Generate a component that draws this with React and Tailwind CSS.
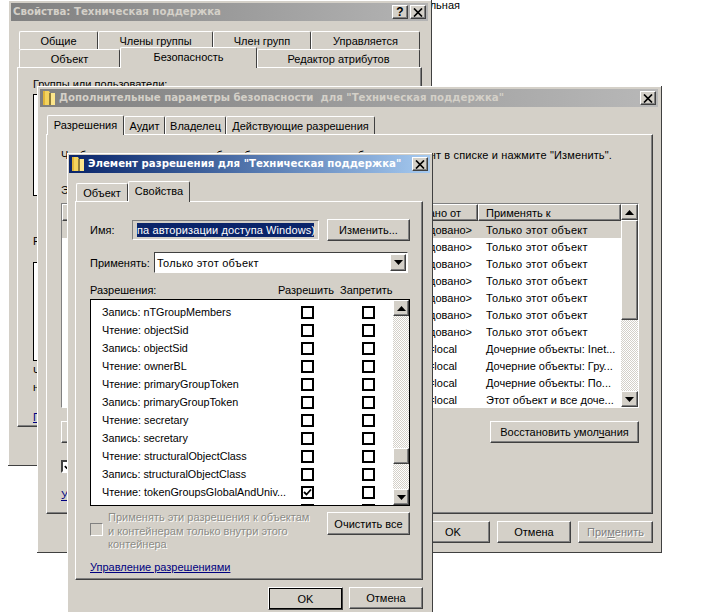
import React from 'react';

const bevel = 'border border-t-white border-l-white border-r-[#404040] border-b-[#404040] shadow-[inset_-1px_-1px_0_#808080]';
const dither = 'bg-[repeating-conic-gradient(#d4d0c8_0_25%,#ffffff_0_50%)] bg-[length:2px_2px]';

const Btn = ({ className = '', children }) => (
  <div className={`flex items-center justify-center bg-[#d4d0c8] ${bevel} ${className}`}>{children}</div>
);

const Arrow = ({ down }) => (
  <svg width="9" height="5" viewBox="0 0 9 5">
    <path d={down ? 'M0 0H9L4.5 5Z' : 'M0 5H9L4.5 0Z'} fill="#000" />
  </svg>
);

const CloseGlyph = () => (
  <svg width="10" height="9" viewBox="0 0 10 9">
    <path d="M1 0.5L9 8.5M9 0.5L1 8.5" stroke="#000" strokeWidth="1.7" fill="none" />
  </svg>
);

const Folder = () => (
  <svg width="14" height="16" viewBox="0 0 14 16" className="shrink-0">
    <path d="M1 1H7L8 3H13V15H1Z" fill="#f3d35e" />
    <path d="M7 3H9V15H7Z" fill="#8f7b3a" />
    <path d="M9 3H13V15H9Z" fill="#fbe58c" />
    <path d="M1 1H3V15H1Z" fill="#e0b53a" />
  </svg>
);

const TitleBar = ({ grad, text, icon, help, textColor }) => (
  <div className={`flex items-center h-[18px] pl-[2px] pr-[2px] ${grad}`}>
    {icon && <Folder />}
    <span className={`${icon ? 'ml-[3px]' : ''} whitespace-pre font-['DejaVu_Sans',sans-serif] font-bold text-[10.2px] ${textColor}`}>{text}</span>
    <div className="ml-auto flex gap-[2px]">
      {help && <Btn className="w-[16px] h-[14px] font-bold text-[12px]">?</Btn>}
      <Btn className="w-[16px] h-[14px]"><CloseGlyph /></Btn>
    </div>
  </div>
);

const Tab = ({ active, className = '', children }) => (
  <div
    className={`flex items-center justify-center rounded-t-[2px] bg-[#d4d0c8] border-t border-l border-r border-t-white border-l-white border-r-[#404040] whitespace-nowrap ${
      active ? 'relative z-10 -mb-px pb-[2px]' : ''
    } ${className}`}
  >
    {children}
  </div>
);

const Checkbox = ({ checked }) => (
  <div className="w-[13px] h-[13px] border-2 border-black bg-white flex items-center justify-center shrink-0">
    {checked && (
      <svg width="9" height="9" viewBox="0 0 9 9">
        <path d="M1 4L3.5 6.5L8 1.5" stroke="#000" strokeWidth="1.8" fill="none" />
      </svg>
    )}
  </div>
);

const permissions = [
  ['Запись: nTGroupMembers'],
  ['Чтение: objectSid'],
  ['Запись: objectSid'],
  ['Чтение: ownerBL'],
  ['Чтение: primaryGroupToken'],
  ['Запись: primaryGroupToken'],
  ['Чтение: secretary'],
  ['Запись: secretary'],
  ['Чтение: structuralObjectClass'],
  ['Запись: structuralObjectClass'],
  ['Чтение: tokenGroupsGlobalAndUniv...', true],
  ['Чтение: tokenGroupsNoGCAcceptable'],
];

const entries = [
  ['<не унаследовано>', 'Только этот объект'],
  ['<не унаследовано>', 'Только этот объект'],
  ['<не унаследовано>', 'Только этот объект'],
  ['<не унаследовано>', 'Только этот объект'],
  ['<не унаследовано>', 'Только этот объект'],
  ['<не унаследовано>', 'Только этот объект'],
  ['<не унаследовано>', 'Только этот объект'],
  ['DC=ad,DC=local', 'Дочерние объекты: Inet...'],
  ['DC=ad,DC=local', 'Дочерние объекты: Гру...'],
  ['DC=ad,DC=local', 'Дочерние объекты: По...'],
  ['DC=ad,DC=local', 'Этот объект и все доче...'],
];

const PropertiesWindow = () => (
  <div className="absolute left-[8px] top-0 w-[424px] h-[466px] bg-[#d4d0c8] border-r border-b border-[#404040] shadow-[inset_1px_1px_0_#fff] p-[3px]">
    <TitleBar grad="bg-gradient-to-r from-[#808080] to-[#b4b4b4]" textColor="text-[#d4d0c8]" text="Свойства: Техническая поддержка" help />
    <div className="mt-[10px] ml-[8px] flex h-[18px]">
      <Tab className="w-[79px]">Общие</Tab>
      <Tab className="w-[115px]">Члены группы</Tab>
      <Tab className="w-[98px]">Член групп</Tab>
      <Tab className="w-[109px]">Управляется</Tab>
    </div>
    <div className="ml-[8px] flex items-end h-[18px]">
      <Tab className="w-[101px] h-[18px]">Объект</Tab>
      <Tab active className="w-[137px] h-[21px]">Безопасность</Tab>
      <Tab className="w-[163px] h-[18px]">Редактор атрибутов</Tab>
    </div>
    <div className={`ml-[6px] w-[405px] h-[360px] pl-[15px] pt-[9px] ${bevel}`}>
      <p>Группы или пользователи:</p>
      <div className="mt-[3px] w-[300px] h-[102px] bg-white border border-black" />
      <p className="mt-[38px]">Разрешения для группы Техническая поддержка</p>
      <div className="mt-[14px] w-[300px] h-[99px] bg-white border border-black" />
      <p className="mt-[3px]">Чтобы задать особые разрешения или параметры,</p>
      <p className="mt-[2px]">нажмите кнопку "Дополнительно".</p>
      <p className="mt-[16px] text-[#000080] underline">Подробнее об управлении доступом</p>
    </div>
  </div>
);

const AdvancedWindow = () => (
  <div className="absolute left-[37px] top-[86px] w-[625px] h-[467px] bg-[#d4d0c8] border-r border-b border-[#404040] shadow-[inset_1px_1px_0_#fff] px-[3px] pt-[3px]">
    <TitleBar
      grad="bg-gradient-to-r from-[#808080] to-[#b8b8b8]"
      textColor="text-[#d4d0c8]"
      icon
      text={'Дополнительные параметры безопасности  для "Техническая поддержка"'}
    />
    <div className="mt-[9px] ml-[7px] flex items-end h-[18px]">
      <Tab active className="w-[77px] h-[20px]">Разрешения</Tab>
      <Tab className="w-[41px] h-[18px]">Аудит</Tab>
      <Tab className="w-[61px] h-[18px]">Владелец</Tab>
      <Tab className="w-[149px] h-[18px]">Действующие разрешения</Tab>
    </div>
    <div className={`ml-[6px] mr-[5px] h-[380px] pl-[14px] pr-[13px] pt-[13px] ${bevel}`}>
      <p className="whitespace-nowrap tracking-[0.15px]">
        Чтобы просмотреть данные об особых разрешениях, выберите элемент в списке и нажмите "Изменить".
      </p>
      <p className="mt-[21px]">Элементы разрешений:</p>
      <div className="mt-[6px] h-[205px] flex bg-white border border-t-[#808080] border-l-[#808080] border-r-white border-b-white">
        <div className="flex-1 min-w-0">
          <div className="flex h-[17px]">
            <Btn className="flex-1 justify-end pr-[16px]">Унаследовано от</Btn>
            <Btn className="w-[143px] !justify-start pl-[7px]">Применять к</Btn>
          </div>
          {entries.map(([from, to], i) => (
            <div key={i} className={`flex h-[17px] items-center ${i === 0 ? 'bg-[#d4d0c8]' : ''}`}>
              <span className={`flex-1 text-right whitespace-nowrap ${i > 6 ? 'pr-[21px]' : 'pr-[6px]'}`}>{from}</span>
              <span className={`w-[143px] pl-[8px] whitespace-nowrap ${i <= 6 ? 'tracking-[0.25px]' : ''}`}>{to}</span>
            </div>
          ))}
        </div>
        <div className="w-[17px] flex flex-col">
          <Btn className="h-[16px]"><Arrow /></Btn>
          <Btn className="h-[100px]" />
          <div className={`flex-1 ${dither}`} />
          <Btn className="h-[16px]"><Arrow down /></Btn>
        </div>
      </div>
      <div className="mt-[13px] flex justify-between">
        <Btn className="w-[74px] h-[22px]">Добавить...</Btn>
        <Btn className="w-[149px] h-[22px]">
          <span>Восстановить умол<u>ч</u>ания</span>
        </Btn>
      </div>
      <div className="mt-[16px] flex items-center gap-[5px]">
        <div className="w-[13px] h-[13px] shrink-0 flex items-center justify-center bg-white border-2 border-t-[#404040] border-l-[#404040] border-r-white border-b-white">
          <svg width="7" height="7" viewBox="0 0 9 9">
            <path d="M1 4L3.5 6.5L8 1.5" stroke="#000" strokeWidth="2" fill="none" />
          </svg>
        </div>
        <span>Наследовать от родительского объекта</span>
      </div>
      <p className="mt-[15px] text-[#000080] underline">Управление разрешениями</p>
    </div>
    <div className="mt-[7px] mr-[5px] flex justify-end gap-[7px]">
      <Btn className="w-[74px] h-[22px]">OK</Btn>
      <Btn className="w-[74px] h-[22px]">Отмена</Btn>
      <Btn className="w-[75px] h-[22px] text-[#808080] [text-shadow:1px_1px_0_#fff]">
        <span>При<u>м</u>енить</span>
      </Btn>
    </div>
  </div>
);

const PermissionWindow = () => (
  <div className="absolute left-[67px] top-[153px] w-[366px] h-[470px] bg-[#d4d0c8] border-r border-b border-[#404040] shadow-[inset_1px_1px_0_#fff] p-[2px]">
    <TitleBar
      grad="bg-gradient-to-r from-[#0a246a] to-[#a6caf0]"
      textColor="text-white"
      icon
      text={'Элемент разрешения для "Техническая поддержка"'}
    />
    <div className="mt-[8px] ml-[7px] flex items-end h-[20px]">
      <Tab className="w-[52px] h-[18px]">Объект</Tab>
      <Tab active className="w-[62px] h-[21px]">Свойства</Tab>
    </div>
    <div className={`ml-[6px] w-[348px] h-[379px] pl-[14px] pr-[12px] pt-[17px] ${bevel}`}>
      <div className="flex items-center h-[22px]">
        <span className="w-[42px]">Имя:</span>
        <div className="w-[187px] h-[20px] flex items-center justify-center border border-t-[#808080] border-l-[#808080] border-r-white border-b-white">
          <span className="bg-[#0a246a] text-white w-[177px] text-center whitespace-nowrap tracking-[0.1px]">па авторизации доступа Windows)</span>
        </div>
        <Btn className="ml-[8px] w-[83px] h-[22px]">Изменить...</Btn>
      </div>
      <div className="mt-[11px] flex items-center h-[21px]">
        <span className="w-[64px] whitespace-nowrap">Применять:</span>
        <div className="w-[254px] h-[21px] flex items-center justify-between bg-white border border-t-[#404040] border-l-[#404040] border-r-white border-b-white pl-[2px] pr-[1px]">
          <span className="tracking-[0.25px]">Только этот объект</span>
          <Btn className="w-[16px] h-[17px]"><Arrow down /></Btn>
        </div>
      </div>
      <div className="mt-[10px] flex h-[15px]">
        <span className="w-[188px]">Разрешения:</span>
        <span className="w-[62px]">Разрешить</span>
        <span>Запретить</span>
      </div>
      <div className="mt-[1px] w-[320px] h-[207px] flex bg-white border border-black overflow-hidden">
        <div className="flex-1 min-w-0 pt-[3px] text-[10.8px]">
          {permissions.map(([name, allow]) => (
            <div key={name} className="flex items-center h-[18px] pl-[11px]">
              <span className="w-[199px] whitespace-nowrap">{name}</span>
              <Checkbox checked={allow} />
              <div className="ml-[48px]"><Checkbox /></div>
            </div>
          ))}
        </div>
        <div className="w-[16px] flex flex-col">
          <Btn className="h-[16px]"><Arrow /></Btn>
          <div className={`h-[132px] ${dither}`} />
          <Btn className="h-[16px]" />
          <div className={`flex-1 ${dither}`} />
          <Btn className="h-[16px]"><Arrow down /></Btn>
        </div>
      </div>
      <div className="mt-[5px] flex">
        <div className="mt-[12px] w-[13px] h-[13px] border border-t-[#808080] border-l-[#808080] border-r-white border-b-white" />
        <p className="ml-[5px] w-[208px] leading-[13.5px] text-[#8c8c86] [text-shadow:1px_1px_0_#fff]">
          Применять эти разрешения к объектам и контейнерам только внутри этого контейнера
        </p>
        <Btn className="ml-[11px] mt-[1px] w-[83px] h-[23px]">Очистить все</Btn>
      </div>
      <p className="mt-[8px] text-[#000080] underline">Управление разрешениями</p>
    </div>
    <div className="mt-[7px] ml-[199px] flex gap-[6px]">
      <Btn className="w-[75px] h-[23px] ring-1 ring-inset ring-black">OK</Btn>
      <Btn className="w-[74px] h-[22px]">Отмена</Btn>
    </div>
  </div>
);

export default function App() {
  return (
    <div className="relative w-[701px] h-[612px] overflow-hidden bg-white text-black text-[11px] leading-[14px] font-['Liberation_Sans',sans-serif]">
      <div className="absolute left-[300px] top-[-2px] w-[160px] text-right">Универсальная</div>
      <PropertiesWindow />
      <AdvancedWindow />
      <PermissionWindow />
    </div>
  );
}
